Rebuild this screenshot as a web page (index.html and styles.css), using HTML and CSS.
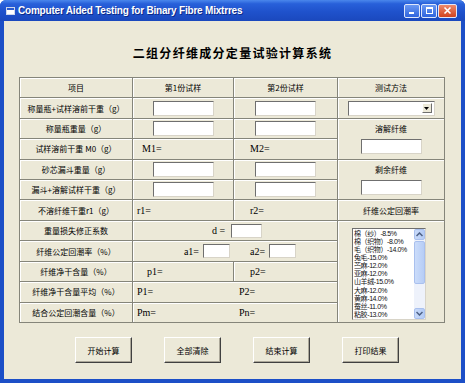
FILE: index.html
```
<!DOCTYPE html>
<html lang="zh-CN">
<head>
    <meta charset="UTF-8">
    <title>Computer Aided Testing for Binary Fibre Mixtrres</title>
    <link rel="stylesheet" href="styles.css">
</head>
<body>
  <div class="window">
    <div class="titlebar">
      <svg class="app-icon" width="9" height="8" viewBox="0 0 9 8">
        <rect x="0.5" y="0.5" width="8" height="7" fill="#fff" stroke="#cfd8ea"/>
        <rect x="1" y="1" width="7" height="2" fill="#2a5bd0"/>
      </svg>
      <span class="caption">Computer Aided Testing for Binary Fibre Mixtrres</span>
      <div class="controls">
        <span class="ctl"><svg width="9" height="9" viewBox="0 0 9 9"><rect x="1" y="6" width="5" height="2" fill="#fff"/></svg></span>
        <span class="ctl"><svg width="9" height="9" viewBox="0 0 9 9"><rect x="1.5" y="1.5" width="6" height="6" fill="none" stroke="#fff"/><rect x="1" y="1" width="7" height="2" fill="#fff"/></svg></span>
        <span class="ctl close"><svg width="9" height="9" viewBox="0 0 9 9"><path d="M1.5 1.5 L7.5 7.5 M7.5 1.5 L1.5 7.5" stroke="#fff" stroke-width="1.6"/></svg></span>
      </div>
    </div>

    <div class="client">
      <h1 class="heading">二组分纤维成分定量试验计算系统</h1>

      <div class="sheet">
        <!-- header -->
        <div class="cell">项目</div>
        <div class="cell">第1份试样</div>
        <div class="cell">第2份试样</div>
        <div class="cell">测试方法</div>

        <div class="cell">称量瓶+试样溶前干重（g）</div>
        <div class="cell"><input class="field" type="text"></div>
        <div class="cell"><input class="field" type="text"></div>
        <div class="cell">
          <div class="combo"><span class="combo-btn"><svg width="5" height="3" viewBox="0 0 5 3"><path d="M0 0 H5 L2.5 3 Z" fill="#000"/></svg></span></div>
        </div>

        <div class="cell">称量瓶重量（g）</div>
        <div class="cell"><input class="field" type="text"></div>
        <div class="cell"><input class="field" type="text"></div>
        <div class="cell method span-2">
          <span>溶解纤维</span>
          <input class="field" type="text">
        </div>

        <div class="cell">试样溶前干重 M0（g）</div>
        <div class="cell value pad-m1">M1=</div>
        <div class="cell value pad-right">M2=</div>

        <div class="cell">砂芯漏斗重量（g）</div>
        <div class="cell"><input class="field" type="text"></div>
        <div class="cell"><input class="field" type="text"></div>
        <div class="cell method span-2">
          <span>剩余纤维</span>
          <input class="field" type="text">
        </div>

        <div class="cell">漏斗+溶解试样干重（g）</div>
        <div class="cell"><input class="field" type="text"></div>
        <div class="cell"><input class="field" type="text"></div>

        <div class="cell">不溶纤维干重r1（g）</div>
        <div class="cell value pad-left">r1=</div>
        <div class="cell value pad-right">r2=</div>
        <div class="cell">纤维公定回潮率</div>

        <div class="cell">重量损失修正系数</div>
        <div class="cell wide center-d">
          <span class="value">d =</span>
          <input class="field small" type="text">
        </div>
        <div class="cell list-cell span-5">
          <div class="listbox">
            <ul class="items">
              <li>棉（纱）-8.5%</li>
              <li>棉（织物）-8.0%</li>
              <li>毛（织物）-14.0%</li>
              <li>兔毛-15.0%</li>
              <li>苎麻-12.0%</li>
              <li>亚麻-12.0%</li>
              <li>山羊绒-15.0%</li>
              <li>大麻-12.0%</li>
              <li>黄麻-14.0%</li>
              <li>蚕丝-11.0%</li>
              <li>粘胶-13.0%</li>
            </ul>
            <div class="scrollbar">
              <span class="sb-btn"><svg width="7" height="5" viewBox="0 0 7 5"><path d="M0.5 4 L3.5 1 L6.5 4" fill="none" stroke="#4d6185" stroke-width="1.5"/></svg></span>
              <span class="sb-thumb"></span>
              <span class="sb-btn"><svg width="7" height="5" viewBox="0 0 7 5"><path d="M0.5 1 L3.5 4 L6.5 1" fill="none" stroke="#4d6185" stroke-width="1.5"/></svg></span>
            </div>
          </div>
        </div>

        <div class="cell">纤维公定回潮率（%）</div>
        <div class="cell wide">
          <div class="half first">
            <span class="value">a1=</span>
            <input class="field tiny" type="text">
          </div>
          <div class="half second">
            <span class="value">a2=</span>
            <input class="field tiny" type="text">
          </div>
        </div>

        <div class="cell">纤维净干含量（%）</div>
        <div class="cell value pad-p1">p1=</div>
        <div class="cell value pad-right">p2=</div>

        <div class="cell">纤维净干含量平均（%）</div>
        <div class="cell wide">
          <div class="half plain"><span class="value">P1=</span></div>
          <div class="half plain-2"><span class="value">P2=</span></div>
        </div>

        <div class="cell">结合公定回潮含量（%）</div>
        <div class="cell wide">
          <div class="half plain"><span class="value">Pm=</span></div>
          <div class="half plain-2"><span class="value">Pn=</span></div>
        </div>
      </div>

      <div class="actions">
        <button class="btn">开始计算</button>
        <button class="btn">全部清除</button>
        <button class="btn">结束计算</button>
        <button class="btn">打印结果</button>
      </div>
    </div>
  </div>
</body>
</html>
```

FILE: styles.css
```
* {
    box-sizing: border-box;
    margin: 0;
    padding: 0;
}

body {
    width: 465px;
    height: 383px;
    overflow: hidden;
    font-family: "Noto Sans CJK SC", sans-serif;
    background: #fff;
}

.window {
    width: 465px;
    height: 383px;
    display: flex;
    flex-direction: column;
    background: #1c4fc7; /* frame colour */
    border-radius: 6px 6px 0 0;
}

.titlebar {
    height: 21px;
    flex: none;
    display: flex;
    align-items: center;
    padding: 0 8px 0 6px;
    border-radius: 6px 6px 0 0;
    background: linear-gradient(#4a87ec 0%, #2860da 18%, #1f52cc 55%, #1a48bd 100%);
    color: #fff;
}

.app-icon {
    flex: none;
}

.caption {
    margin-left: 3px;
    font: bold 10px "Liberation Sans", sans-serif;
    letter-spacing: -0.2px;
    text-shadow: 1px 1px 0 #0c2a88;
}

.controls {
    margin-left: auto;
    display: flex;
    gap: 1px;
}

.ctl {
    width: 16px;
    height: 14px;
    display: flex;
    align-items: center;
    justify-content: center;
    border: 1px solid #dfe7fb;
    border-radius: 2px;
    background: linear-gradient(#6a98f2, #2f64de);
}

.ctl.close {
    width: 19px;
    background: linear-gradient(#ee8a6c, #d0431f);
}

.client {
    flex: 1;
    margin: 0 4px 4px;
    background: #ece9d8;
}

.heading {
    padding-top: 22px;
    height: 42px;
    line-height: 20px;
    text-align: center;
    font-size: 12px;
    font-weight: bold;
    letter-spacing: 1.3px;
    color: #000;
}

.sheet {
    margin: 14px 0 0 15px;
    width: 426px;
    height: 246px;
    display: grid;
    grid-template-columns: 113px 101px 104px 107px;
    grid-template-rows: repeat(12, 1fr);
    border-top: 1px solid #85857a;
    border-left: 1px solid #85857a;
}

.cell {
    display: flex;
    align-items: center;
    justify-content: center;
    border-right: 1px solid #85857a;
    border-bottom: 1px solid #85857a;
    box-shadow: inset 1px 1px 0 #fff;
    font-size: 8px;
    color: #000;
    white-space: nowrap;
    overflow: hidden;
}

.value {
    font-family: "Liberation Serif", serif;
    font-size: 10px;
}

.cell.value {
    justify-content: flex-start;
}

.pad-left { padding-left: 4px; }
.pad-m1 { padding-left: 9px; }
.pad-p1 { padding-left: 14px; }
.pad-right { padding-left: 16px; }

.span-2 { grid-row: span 2; }
.span-5 { grid-row: span 5; }
.wide { grid-column: span 2; }

.center-d {
    gap: 6px;
    padding-left: 4px;
}

.half {
    display: flex;
    align-items: center;
    height: 100%;
}

.half.first {
    width: 101px;
    justify-content: flex-end;
    gap: 4px;
    padding-right: 4px;
}

.half.second {
    flex: 1;
    gap: 4px;
    padding-left: 16px;
}

.half.plain {
    width: 101px;
    padding-left: 4px;
}

.half.plain-2 {
    flex: 1;
    padding-left: 5px;
}

.cell.wide {
    justify-content: flex-start;
}

.cell.center-d {
    justify-content: center;
}

.field {
    width: 61px;
    height: 15px;
    background: #fff;
    border-top: 1px solid #6f6f6f;
    border-left: 1px solid #6f6f6f;
    border-right: 1px solid #d8d4c8;
    border-bottom: 1px solid #d8d4c8;
    outline: none;
}

.field.small {
    width: 31px;
    height: 14px;
}

.field.tiny {
    width: 27px;
    height: 14px;
}

.method {
    flex-direction: column;
    justify-content: flex-start;
    padding-top: 4px;
    gap: 5px;
}

.combo {
    width: 87px;
    height: 15px;
    display: flex;
    justify-content: flex-end;
    align-items: center;
    padding-right: 2px;
    background: #fff;
    border-top: 1px solid #6f6f6f;
    border-left: 1px solid #6f6f6f;
    border-right: 1px solid #d8d4c8;
    border-bottom: 1px solid #d8d4c8;
}

.combo-btn {
    width: 10px;
    height: 10px;
    display: flex;
    align-items: center;
    justify-content: center;
    background: #ece9d8;
    border: 1px solid;
    border-color: #fff #6f6f6f #6f6f6f #fff;
}

.list-cell {
    align-items: flex-start;
    padding-top: 7px;
    padding-right: 4px;
}

.listbox {
    width: 74px;
    height: 92px;
    display: flex;
    background: #fff;
    border-top: 1px solid #6f6f6f;
    border-left: 1px solid #6f6f6f;
    border-right: 1px solid #d8d4c8;
    border-bottom: 1px solid #d8d4c8;
}

.items {
    list-style: none;
    flex: 1;
    min-width: 0;
    overflow: hidden;
    padding: 1px 0 0 1px;
    font-family: "Liberation Sans", "Noto Sans CJK SC", sans-serif;
    font-size: 7px;
    line-height: 8.1px;
    letter-spacing: -0.4px;
    color: #111;
}

.scrollbar {
    width: 11px;
    flex: none;
    display: flex;
    flex-direction: column;
    background: #eef2fb;
}

.sb-btn {
    height: 11px;
    display: flex;
    align-items: center;
    justify-content: center;
    background: linear-gradient(90deg, #c9daf9, #b3cbf5);
    border: 1px solid #a9c0ee;
    border-radius: 2px;
}

.sb-thumb {
    flex: 1;
    margin: 1px 0 24px;
    background: linear-gradient(90deg, #cbdcfa, #b6cdf6);
    border: 1px solid #a9c0ee;
    border-radius: 2px;
}

.actions {
    display: flex;
    gap: 32px;
    margin-top: 14px;
    padding-left: 71px;
}

.btn {
    width: 57px;
    height: 26px;
    background: #ece9d8;
    border: 1px solid;
    border-color: #fff #404040 #404040 #fff;
    box-shadow: inset -1px -1px 0 #aca899;
    font-family: "Noto Sans CJK SC", sans-serif;
    font-size: 8px;
    color: #000;
}
```
